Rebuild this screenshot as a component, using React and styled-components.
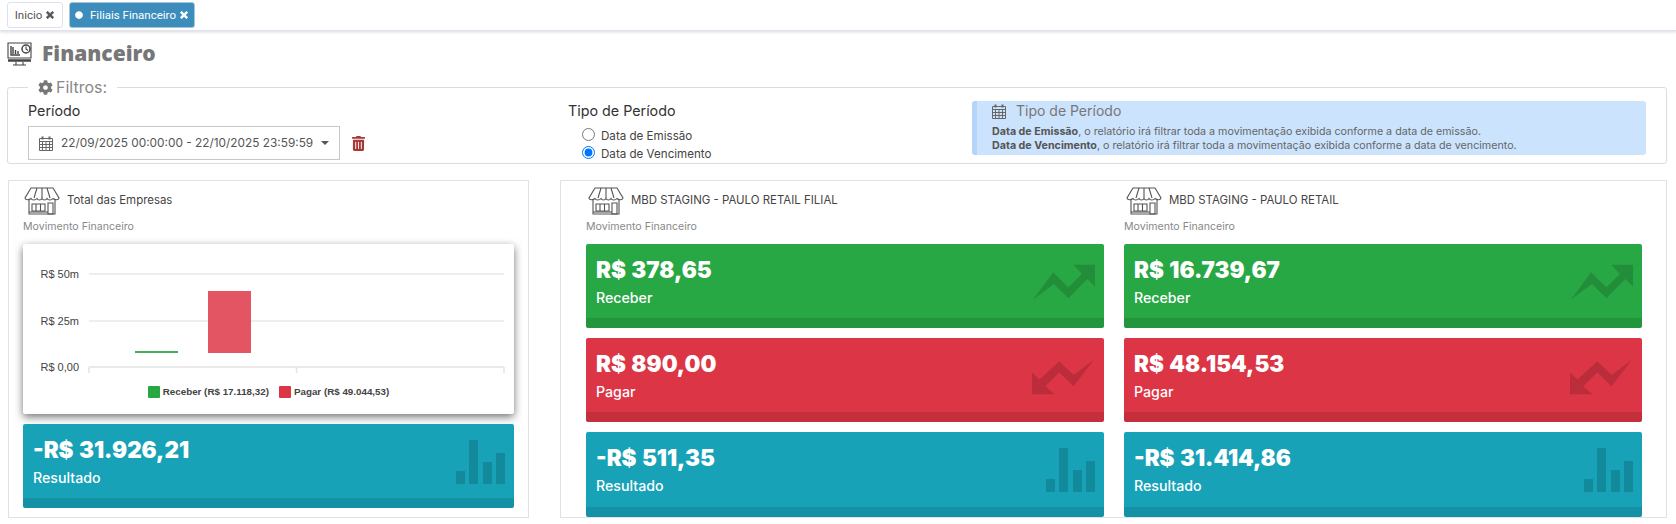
import React from "react";
import styled, { createGlobalStyle } from "styled-components";
import { FaTimes, FaCog, FaTrashAlt, FaCircle } from "react-icons/fa";

const Global = createGlobalStyle`
  html, body { margin: 0; padding: 0; background: #fff; }
  body { font-family: Inter, "Open Sans", sans-serif; color: #444; overflow: hidden; }
  * { box-sizing: border-box; }
`;

const TabBar = styled.div`
  height: 31px;
  display: flex;
  align-items: flex-start;
  gap: 6px;
  padding: 2px 0 0 7px;
  border-bottom: 1px solid #dfe2ea;
  box-shadow: 0 1px 3px rgba(120,130,160,.3);
`;
const Tab = styled.div`
  height: 26px;
  width: ${p => p.$w}px;
  display: flex;
  align-items: center;
  justify-content: center;
  gap: 3px;
  font: 11.5px Roboto, sans-serif;
  border-radius: 3px;
  border: 1px solid ${p => (p.$active ? "#a7c6dd" : "#dfe2ea")};
  background: ${p => (p.$active ? "#3c8dbc" : "#fff")};
  color: ${p => (p.$active ? "#fff" : "#555")};
  svg { width: 10px; height: 10px; stroke: currentColor; stroke-width: 50px; }
`;
const Dot = styled(FaCircle)`
  && { width: 8px; height: 8px; margin-right: 4px; stroke-width: 0; }
`;
const TitleRow = styled.div`
  height: 45px;
  padding: 11px 0 0 7px;
  display: flex;
  align-items: flex-start;
  gap: 10px;
`;
const PageTitle = styled.h1`
  margin: -1px 0 0;
  font: 800 21px/24px "Open Sans", sans-serif;
  color: #777;
`;
const Filters = styled.fieldset`
  margin: 2px 9px 0 7px;
  padding: 0 20px 0 20px;
  height: 86px;
  border: 1px solid #d9dce6;
  border-radius: 3px;
  display: grid;
  grid-template-columns: 540px 404px 1fr;
`;
const Legend = styled.legend`
  margin-left: 0;
  padding: 0 10px;
  height: 18px;
  font: 400 16px/18px Inter, sans-serif;
  color: #888;
  display: flex;
  align-items: center;
  gap: 3px;
  svg { width: 15px; height: 15px; color: #777; }
`;
const Column = styled.div`
  display: flex;
  flex-direction: column;
`;
const FieldLabel = styled.div`
  font: 400 14.3px/18px Inter, sans-serif;
  color: #333;
  margin-top: 6px;
`;
const DateRow = styled.div`
  display: flex;
  align-items: center;
  margin-top: 6px;
  gap: 12px;
`;
const DateBox = styled.div`
  width: 312px;
  height: 34px;
  border: 1px solid #c8c8c8;
  display: flex;
  align-items: center;
  padding-left: 10px;
  font: 11.85px Inter, sans-serif;
  color: #555;
  svg { margin-right: 8px; }
`;
const Caret = styled.span`
  margin-left: 8px;
  width: 0;
  height: 0;
  border: 4px solid transparent;
  border-top-color: #555;
  border-bottom: 0;
`;
const Trash = styled(FaTrashAlt)`
  width: 13px;
  height: 15px;
  color: #a83838;
`;
const RadioGroup = styled.div`
  padding-left: 14px;
  margin-top: 7px;
  display: flex;
  flex-direction: column;
`;
const RadioRow = styled.label`
  display: flex;
  align-items: center;
  height: 18px;
  font: 11.6px Inter, sans-serif;
  color: #444;
  input { margin: 0 6px 3px 0; width: 13px; height: 13px; }
`;
const Info = styled.div`
  margin-top: 5px;
  height: 54px;
  background: #cbe3fd;
  border-left: 5px solid #b3d5fb;
  border-radius: 3px;
  padding: 1px 0 0 15px;
  font: 10.7px/14px Inter, sans-serif;
  color: #666;
  b { color: #555; }
`;
const InfoTitle = styled.div`
  font: 14px/18px Inter, sans-serif;
  color: #777;
  display: flex;
  align-items: center;
  gap: 10px;
  margin-bottom: 5px;
`;
const Main = styled.div`
  margin: 16px 9px 0 8px;
  display: flex;
  gap: 31px;
  height: 338px;
`;
const Panel = styled.section`
  border: 1px solid #dfe2e8;
  display: flex;
  gap: 20px;
  width: ${p => p.$w}px;
  padding-left: ${p => p.$pl}px;
`;
const PanelCol = styled.div`
  width: ${p => p.$w}px;
  display: flex;
  flex-direction: column;
  gap: 10px;
`;
const Head = styled.div`
  height: 53px;
  padding-top: 6px;
`;
const HeadRow = styled.div`
  display: flex;
  align-items: center;
  gap: 7px;
  padding-left: ${p => p.$pl || 1}px;
`;
const HeadTitle = styled.div`
  font: 11.45px Inter, sans-serif;
  color: #444;
  padding-bottom: 2px;
`;
const HeadSub = styled.div`
  font: 10.6px/12px Inter, sans-serif;
  color: #888;
  margin-top: 6px;
`;
const Stat = styled.div`
  height: ${p => p.$h || 84}px;
  border-radius: 2px;
  color: #fff;
  background: ${p => p.$bg};
  display: flex;
  flex-direction: column;
  overflow: hidden;
  flex: none;
`;
const StatBody = styled.div`
  flex: 1;
  padding: 11px 9px 0 10px;
  display: flex;
  justify-content: space-between;
  align-items: flex-start;
`;
const Amount = styled.div`
  font: 900 22.4px/30px Inter, sans-serif;
  word-spacing: 1px;
`;
const StatLabel = styled.div`
  font: 500 14.2px/18px Inter, sans-serif;
  margin-top: 4px;
`;
const StatFooter = styled.div`
  height: 10px;
  background: rgba(0,0,0,.1);
`;
const IconSlot = styled.div`
  margin-top: ${p => p.$top}px;
  margin-right: ${p => p.$right || 0}px;
  line-height: 0;
`;
const ChartCard = styled.div`
  height: 170px;
  border-radius: 2px;
  background: #fff;
  box-shadow: 0 3px 9px rgba(0,0,0,.55);
  flex: none;
`;
const ChartSvg = styled.svg`
  display: block;
`;
const LegendRow = styled.div`
  display: flex;
  justify-content: center;
  gap: 10px;
  margin-top: 5px;
  font: 700 9.8px/12px "Liberation Sans", sans-serif;
  color: #444;
`;
const LegendItem = styled.div`
  display: flex;
  align-items: center;
  gap: 3px;
  &::before {
    content: "";
    width: 12px;
    height: 12px;
    border-radius: 1px;
    background: ${p => p.$c};
  }
`;

const Calendar = () => (
  <svg width="14" height="15" viewBox="0 0 14 15" fill="none" stroke="#666" strokeWidth="1">
    <path d="M.5 2.500h13v12H.5z" />
    <path d="M.5 5.500h13M.5 8.500h13M.5 11.500h13M3.500 5.500v9M7 5.500v9M10.500 5.500v9" />
    <path d="M3.500 0.500v3M10.500 0.500v3" strokeWidth="2" />
  </svg>
);

const Store = () => (
  <svg width="36" height="28" viewBox="0 0 36 28" fill="none" stroke="#555" strokeWidth="1.1">
    <path d="M7 1h22l6 10c0 2-4 2.5-6 .5-1.500 2-5 2-6 0-1 2-4 2-5 0-1 2-4 2-5 0-1.500 2-5 2-6 0C5 13.500 1 13 1 11z" />
    <path d="M13 1l-3 10M18 1v10M23 1l3 10" />
    <path d="M5 13v14h26V13" />
    <path d="M8 17h13v7H8zM12 17v7M16.500 17v7M24 16h5v11h-5z" />
    <path d="M5 25h19" />
  </svg>
);

const Monitor = () => (
  <svg width="25" height="24" viewBox="0 0 25 24" fill="none" stroke="#444" strokeWidth="1.1">
    <path d="M1 1h23v15H1z" />
    <path d="M1 18.500h23" strokeWidth="2.500" />
    <path d="M9 20v3M16 20v3M6 23h13" />
    <path d="M4 4v9h9M6 12V5M8.500 12V8M11 12V9" strokeWidth="1.400" />
    <circle cx="19" cy="7" r="4" strokeWidth="1.500" />
    <path d="M19 4.500V7l2 1.500" />
  </svg>
);

const TrendUp = () => (
  <svg width="62" height="36" viewBox="0 0 184 104" fill="rgba(0,0,0,.15)">
    <path d="M0 104L60 23l45 45 40-40-25-27h64v64l-23-22-56 57-43-42z" />
  </svg>
);
const TrendDown = () => (
  <svg width="62" height="36" viewBox="0 0 182 102" fill="rgba(0,0,0,.15)">
    <path d="M182 0L122 78 80 38 39 78l27 24H0V38l22 20L80 5l42 40z" />
  </svg>
);
const Bars = () => (
  <svg width="49" height="44" viewBox="0 0 49 44" fill="rgba(0,0,0,.15)">
    <rect x="0" y="31" width="9" height="13" />
    <rect x="13" y="0" width="9" height="44" />
    <rect x="27" y="22" width="9" height="22" />
    <rect x="40" y="13" width="9" height="31" />
  </svg>
);

const colors = { green: "#28a745", red: "#dc3545", teal: "#17a2b8" };

const StatCard = ({ bg, amount, label, icon, top, right, h }) => (
  <Stat $bg={bg} $h={h}>
    <StatBody>
      <div>
        <Amount>{amount}</Amount>
        <StatLabel>{label}</StatLabel>
      </div>
      <IconSlot $top={top} $right={right}>{icon}</IconSlot>
    </StatBody>
    <StatFooter />
  </Stat>
);

const PanelHead = ({ title, pl }) => (
  <Head>
    <HeadRow $pl={pl}>
      <Store />
      <HeadTitle>{title}</HeadTitle>
    </HeadRow>
    <HeadSub>Movimento Financeiro</HeadSub>
  </Head>
);

const Company = ({ title, rec, pag, res }) => (
  <PanelCol $w={518}>
    <PanelHead title={title} pl={2} />
    <StatCard bg={colors.green} amount={rec} label="Receber" icon={<TrendUp />} top={9} />
    <StatCard bg={colors.red} amount={pag} label="Pagar" icon={<TrendDown />} top={10} right={1} />
    <StatCard bg={colors.teal} amount={res} label="Resultado" icon={<Bars />} top={5} h={85} />
  </PanelCol>
);

const axisText = { fontFamily: "Liberation Sans, sans-serif", fontSize: 11, fill: "#444", textAnchor: "end" };

const Chart = () => (
  <ChartCard>
    <ChartSvg width="491" height="137" viewBox="0 0 491 137">
      <g stroke="#eeeeee" strokeWidth="2">
        <path d="M66 30h415M66 77h415" />
      </g>
      <path d="M66 123h415M66 123v6M273.500 123v6M481 123v6" stroke="#e4e4e4" strokeWidth="1.500" fill="none" />
      <rect x="112" y="107" width="43" height="2" fill="#3fb059" />
      <rect x="185" y="47" width="43" height="62" fill="#e45564" />
      <text x="56" y="34" style={axisText}>R$ 50m</text>
      <text x="56" y="81" style={axisText}>R$ 25m</text>
      <text x="56" y="127" style={axisText}>R$ 0,00</text>
    </ChartSvg>
    <LegendRow>
      <LegendItem $c={colors.green}>Receber (R$ 17.118,32)</LegendItem>
      <LegendItem $c={colors.red}>Pagar (R$ 49.044,53)</LegendItem>
    </LegendRow>
  </ChartCard>
);

export default function App() {
  return (
    <>
      <Global />
      <TabBar>
        <Tab $w={56}>Inicio <FaTimes /></Tab>
        <Tab $w={126} $active><Dot />Filiais Financeiro <FaTimes /></Tab>
      </TabBar>
      <TitleRow>
        <Monitor />
        <PageTitle>Financeiro</PageTitle>
      </TitleRow>
      <Filters>
        <Legend><FaCog /> Filtros:</Legend>
        <Column>
          <FieldLabel>Período</FieldLabel>
          <DateRow>
            <DateBox><Calendar />22/09/2025 00:00:00 - 22/10/2025 23:59:59<Caret /></DateBox>
            <Trash />
          </DateRow>
        </Column>
        <Column>
          <FieldLabel>Tipo de Período</FieldLabel>
          <RadioGroup>
            <RadioRow><input type="radio" name="tp" readOnly />Data de Emissão</RadioRow>
            <RadioRow><input type="radio" name="tp" defaultChecked />Data de Vencimento</RadioRow>
          </RadioGroup>
        </Column>
        <Info>
          <InfoTitle><Calendar />Tipo de Período</InfoTitle>
          <div><b>Data de Emissão</b>, o relatório irá filtrar toda a movimentação exibida conforme a data de emissão.</div>
          <div><b>Data de Vencimento</b>, o relatório irá filtrar toda a movimentação exibida conforme a data de vencimento.</div>
        </Info>
      </Filters>
      <Main>
        <Panel $w={521} $pl={14}>
          <PanelCol $w={491}>
            <PanelHead title="Total das Empresas" />
            <Chart />
            <StatCard bg={colors.teal} amount="-R$ 31.926,21" label="Resultado" icon={<Bars />} top={5} h={84} />
          </PanelCol>
        </Panel>
        <Panel $w={1107} $pl={25}>
          <Company title="MBD STAGING - PAULO RETAIL FILIAL" rec="R$ 378,65" pag="R$ 890,00" res="-R$ 511,35" />
          <Company title="MBD STAGING - PAULO RETAIL" rec="R$ 16.739,67" pag="R$ 48.154,53" res="-R$ 31.414,86" />
        </Panel>
      </Main>
    </>
  );
}
